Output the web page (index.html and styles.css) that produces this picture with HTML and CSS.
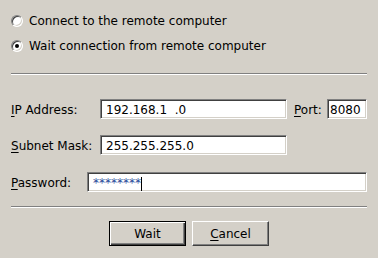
FILE: index.html
```html
<!DOCTYPE html>
<html>
<head>
<meta charset="utf-8">
<link rel="stylesheet" href="styles.css">
</head>
<body>
<div class="dlg">
  <div class="radios">
    <div class="radio-row"><span class="radio"></span><span>Connect to the remote computer</span></div>
    <div class="radio-row"><span class="radio on"></span><span>Wait connection from remote computer</span></div>
  </div>
  <div class="sep sep1"></div>
  <div class="form">
    <div class="row">
      <span class="lbl lbl-ip"><u>I</u>P Address:</span>
      <span class="field f-ip">192.168.1  .0</span>
      <span class="lbl lbl-port"><u>P</u>ort:</span>
      <span class="field f-port">8080</span>
    </div>
    <div class="row row-mask">
      <span class="lbl lbl-ip"><u>S</u>ubnet Mask:</span>
      <span class="field f-ip">255.255.255.0</span>
    </div>
    <div class="row row-pw">
      <span class="lbl lbl-pw"><u>P</u>assword:</span>
      <span class="field f-pw"><span class="stars">********</span><span class="caret"></span></span>
    </div>
  </div>
  <div class="sep sep2"></div>
  <div class="buttons">
    <div class="btn def">Wait</div>
    <div class="btn"><u>C</u>ancel</div>
  </div>
</div>
</body>
</html>
```
FILE: styles.css
```css
html, body {
  margin: 0;
  height: 100%;
}
body {
  background: #d4d0c8;
  font-family: "DejaVu Sans", sans-serif;
  font-size: 12px;
  line-height: 14px;
  color: #000;
}
.dlg {
  padding: 14px 11px 0;
}
.radios {
  display: flex;
  flex-direction: column;
  gap: 11px;
}
.radio-row {
  display: flex;
  align-items: center;
  height: 14px;
  white-space: nowrap;
}
.radio {
  position: relative;
  width: 12px;
  height: 12px;
  box-sizing: border-box;
  border-radius: 50%;
  border: 1px solid;
  border-color: #808080 #ffffff #ffffff #808080;
  box-shadow: inset 1px 1px #404040, inset -1px -1px #d4d0c8;
  background: #fff;
  margin-right: 6px;
  flex: none;
}
.radio.on::after {
  content: "";
  position: absolute;
  left: 3px;
  top: 3px;
  width: 4px;
  height: 4px;
  border-radius: 50%;
  background: #000;
}
.sep {
  height: 1px;
  background: #808080;
  border-bottom: 1px solid #ffffff;
}
.sep1 {
  margin-top: 20px;
}
.sep2 {
  margin-top: 14px;
}
.form {
  margin-top: 24px;
}
.row {
  display: flex;
  align-items: baseline;
  white-space: nowrap;
}
.row-mask {
  margin-top: 16px;
}
.row-pw {
  margin-top: 17px;
}
.lbl u, .btn u {
  text-decoration: underline;
  text-underline-offset: 2px;
}
.lbl-ip {
  width: 89px;
  flex: none;
}
.lbl-pw {
  width: 76px;
  flex: none;
}
.lbl-port {
  width: 33px;
  margin-left: 7px;
  flex: none;
}
.field {
  display: block;
  box-sizing: border-box;
  height: 20px;
  padding: 3px 0 0 5px;
  border: 1px solid;
  border-color: #808080 #ffffff #ffffff #808080;
  box-shadow: inset 1px 1px #404040, inset -1px -1px #d4d0c8;
  background: #ffffff;
  white-space: pre;
  flex: none;
}
.f-ip {
  width: 187px;
}
.f-port {
  width: 40px;
  padding-left: 2px;
}
.f-pw {
  width: 280px;
  display: flex;
  align-items: flex-start;
}
.stars {
  color: #2a4a9a;
}
.caret {
  display: block;
  width: 1px;
  height: 14px;
  background: #000;
  margin-top: 1px;
}
.buttons {
  display: flex;
  justify-content: center;
  gap: 6px;
  margin-top: 13px;
}
.btn {
  width: 77px;
  height: 25px;
  box-sizing: border-box;
  display: flex;
  align-items: center;
  justify-content: center;
  background: #d4d0c8;
  border: 1px solid;
  border-color: #ffffff #404040 #404040 #ffffff;
  box-shadow: inset -1px -1px #808080;
}
.btn.def {
  border-color: #000;
  box-shadow: inset 1px 1px #ffffff, inset -1px -1px #404040, inset -2px -2px #808080;
}
```
